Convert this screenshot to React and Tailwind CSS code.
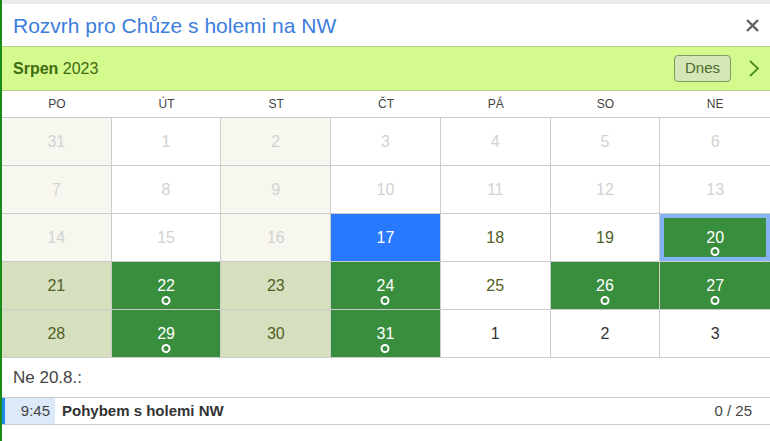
import React from "react";

const weekdays = ["PO", "ÚT", "ST", "ČT", "PÁ", "SO", "NE"];

// kind: past | pastShade | today | free | shade | event | selected | next
const weeks = [
  [["31", "pastShade"], ["1", "past"], ["2", "pastShade"], ["3", "past"], ["4", "past"], ["5", "past"], ["6", "past"]],
  [["7", "pastShade"], ["8", "past"], ["9", "pastShade"], ["10", "past"], ["11", "past"], ["12", "past"], ["13", "past"]],
  [["14", "pastShade"], ["15", "past"], ["16", "pastShade"], ["17", "today"], ["18", "free"], ["19", "free"], ["20", "selected"]],
  [["21", "shade"], ["22", "event"], ["23", "shade"], ["24", "event"], ["25", "free"], ["26", "event"], ["27", "event"]],
  [["28", "shade"], ["29", "event"], ["30", "shade"], ["31", "event"], ["1", "next"], ["2", "next"], ["3", "next"]],
];

const cellStyles = {
  past: "bg-white text-[#d2d2d2]",
  pastShade: "bg-[#f7f7f0] text-[#d2d2d2]",
  today: "bg-[#2979ff] text-white",
  free: "bg-white text-[#4f6125]",
  shade: "bg-[#d6e0bf] text-[#4f6125]",
  event: "bg-[#388e3c] text-white",
  selected: "bg-[#388e3c] text-white border-4 border-[#86b3f5]",
  next: "bg-white text-[#333333]",
};

function DayCell({ day, kind, last }) {
  const hasDot = kind === "event" || kind === "selected";
  return (
    <div
      className={`h-[48px] border-b border-[#cccccc] ${last ? "" : "border-r"}`}
    >
      <div
        className={`relative h-full flex items-center justify-center text-[16px] ${cellStyles[kind]}`}
      >
        <span className="leading-none">{day}</span>
        {hasDot && (
          <span
            className={`absolute left-1/2 -translate-x-1/2 w-[9px] h-[9px] rounded-full border-2 border-white ${
              kind === "selected" ? "bottom-[1px]" : "bottom-[4px]"
            }`}
          />
        )}
      </div>
    </div>
  );
}

export default function App() {
  return (
    <div
      className="flex min-h-screen bg-white"
      style={{ fontFamily: '"Liberation Sans", Arial, sans-serif' }}
    >
      <div className="w-[2px] shrink-0 bg-[#1a8a1a]" />
      <div className="flex-1 min-w-0">
        <div className="h-[4px] bg-[#ececec]" />

        {/* Title */}
        <div className="h-[42px] flex items-center justify-between pl-[11px] pr-[10px]">
          <h1 className="text-[21px] text-[#3b7ddd] leading-none">
            Rozvrh pro Chůze s holemi na NW
          </h1>
          <button className="w-[16px] h-[16px] flex items-center justify-center text-[#666666]">
            <svg viewBox="0 0 14 14" className="w-[13px] h-[13px]">
              <path
                d="M2 2L12 12M12 2L2 12"
                stroke="currentColor"
                strokeWidth="2.6"
                strokeLinecap="square"
              />
            </svg>
          </button>
        </div>

        {/* Month bar */}
        <div className="h-[45px] flex items-center justify-between bg-[#d4f98c] border-y border-[#b7cf8e] pl-[11px] pr-[11px]">
          <div className="text-[16px] text-[#3e6b12]">
            <span className="font-bold">Srpen</span> 2023
          </div>
          <div className="flex items-center gap-[18px]">
            <button className="h-[27px] px-[10px] rounded-[4px] bg-[#d6e6b6] border border-[#7e9a62] text-[15px] text-[#4a6a2a]">
              Dnes
            </button>
            <svg viewBox="0 0 10 17" className="w-[10px] h-[17px] text-[#4a8d1e]">
              <path
                d="M1 1L9 8.5L1 16"
                fill="none"
                stroke="currentColor"
                strokeWidth="1.8"
              />
            </svg>
          </div>
        </div>

        {/* Weekdays */}
        <div className="grid grid-cols-7 h-[26px] items-center">
          {weekdays.map((d) => (
            <div key={d} className="text-center text-[12px] text-[#444444]">
              {d}
            </div>
          ))}
        </div>

        {/* Calendar grid */}
        <div className="grid grid-cols-7 border-t border-[#cccccc]">
          {weeks.flatMap((week, wi) =>
            week.map(([day, kind], di) => (
              <DayCell key={`${wi}-${di}`} day={day} kind={kind} last={di === 6} />
            ))
          )}
        </div>

        {/* Selected day */}
        <div className="h-[39px] flex items-center pl-[11px] text-[17px] text-[#444444]">
          Ne 20.8.:
        </div>
        <div className="flex h-[28px] border-y border-[#cccccc] items-stretch">
          <div className="w-[3px] bg-[#1e88e5]" />
          <div className="w-[50px] bg-[#dbe9f9] flex items-center justify-end pr-[5px] text-[15px] text-[#444444]">
            9:45
          </div>
          <div className="flex-1 flex items-center pl-[7px] text-[15px] font-bold text-[#333333]">
            Pohybem s holemi NW
          </div>
          <div className="flex items-center pr-[18px] text-[15px] text-[#444444]">
            0 / 25
          </div>
        </div>
      </div>
    </div>
  );
}
